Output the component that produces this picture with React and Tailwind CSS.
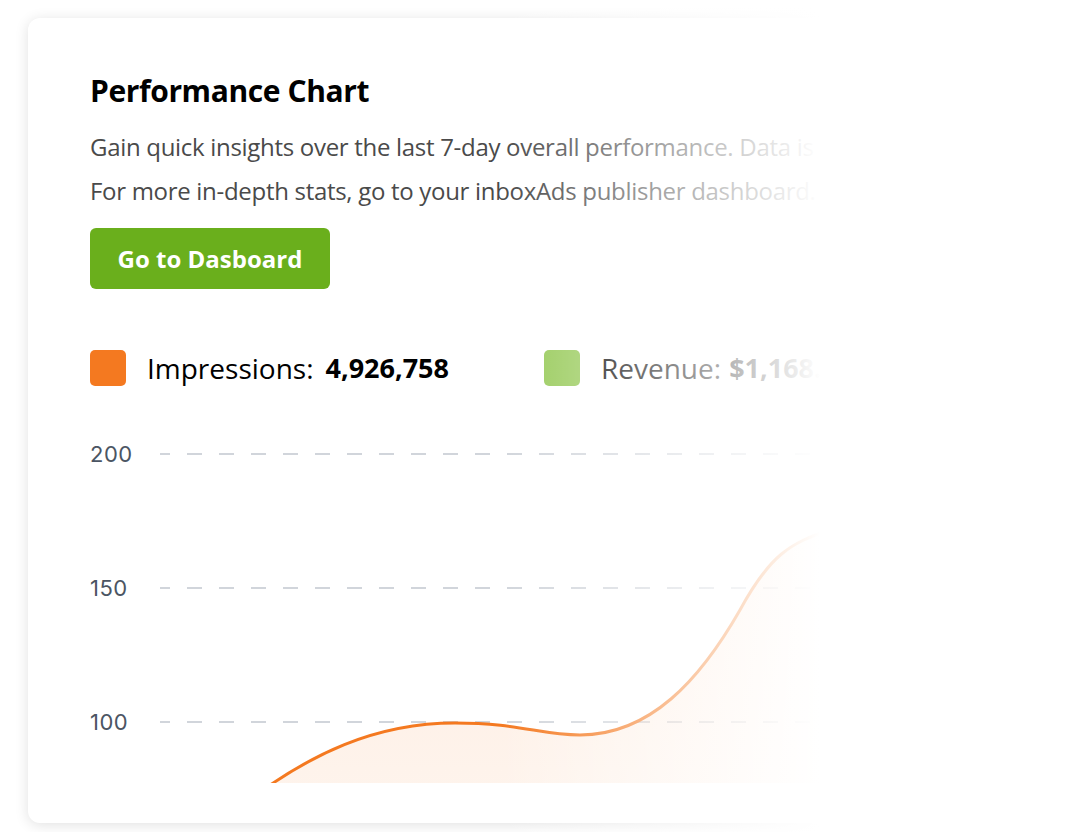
import React from "react";

const SANS = { fontFamily: '"Open Sans", "Noto Sans", sans-serif' };

const gridLines = [
	{ label: "200", y: 24 },
	{ label: "150", y: 158 },
	{ label: "100", y: 292 },
];

function Chart() {
	return (
		<svg width="900" height="353" className="block">
			<defs>
				<linearGradient id="area" x1="0" y1="0" x2="0" y2="1">
					<stop offset="0" stopColor="#f47920" stopOpacity="0.14" />
					<stop offset="1" stopColor="#f47920" stopOpacity="0.08" />
				</linearGradient>
			</defs>
			{gridLines.map((g) => (
				<g key={g.label}>
					<text x="0" y={g.y + 8} fill="#4b5563" fontSize="22" fontFamily="Inter, sans-serif" letterSpacing="0.5">
						{g.label}
					</text>
					<line x1="70" x2="900" y1={g.y} y2={g.y} stroke="#d1d5db" strokeWidth="2" strokeDasharray="15 17" strokeDashoffset="5" />
				</g>
			))}
			<path
				d="M 140 385 C 220 320, 290 293, 365 293 C 430 293, 450 305, 490 305 C 560 305, 610 250, 650 180 C 680 125, 700 113, 740 100 L 740 353 L 140 353 Z"
				fill="url(#area)"
			/>
			<path
				d="M 140 385 C 220 320, 290 293, 365 293 C 430 293, 450 305, 490 305 C 560 305, 610 250, 650 180 C 680 125, 700 113, 740 100"
				fill="none"
				stroke="#f47920"
				strokeWidth="3"
			/>
		</svg>
	);
}

export default function App() {
	return (
		<div className="relative w-[1080px] h-[832px] overflow-hidden bg-white" style={SANS}>
			<div className="ml-[28px] mt-[18px] w-[1040px] h-[805px] rounded-xl bg-white shadow-[0_2px_14px_rgba(0,0,0,0.12)] pl-[62px] pt-[55px] flex flex-col">
				<h1 className="text-[30px] leading-[36px] font-bold tracking-[-0.4px] text-black">Performance Chart</h1>
				<p className="mt-[16px] text-[24px] leading-[44px] tracking-[-0.3px] text-[#4a4a4a]">
					Gain quick insights over the last 7-day overall performance. Data is updated daily.
					<br />
					For more in-depth stats, go to your inboxAds publisher dashboard.
				</p>
				<button className="mt-[15px] w-[240px] h-[61px] rounded-md bg-[#6aaf1c] text-white text-[24px] font-bold text-center">
					Go to Dasboard
				</button>
				<div className="mt-[61px] flex items-center h-[36px]">
					<span className="w-[36px] h-[36px] rounded-[5px] bg-[#f47920]" />
					<span className="ml-[21px] text-[28px] text-black">Impressions:</span>
					<span className="ml-[12px] text-[27px] font-bold text-black">4,926,758</span>
					<span className="ml-[95px] w-[36px] h-[36px] rounded-[5px] bg-[#96c957]" />
					<span className="ml-[21px] text-[28px] text-black">Revenue:</span>
					<span className="ml-[8px] text-[27px] font-bold text-black">$1,168.42</span>
				</div>
				<div className="mt-[44px]">
					<Chart />
				</div>
			</div>
			<div className="absolute top-0 bottom-0 left-[500px] right-0 bg-[linear-gradient(to_right,rgba(255,255,255,0)_0px,#fff_320px)]" />
		</div>
	);
}
